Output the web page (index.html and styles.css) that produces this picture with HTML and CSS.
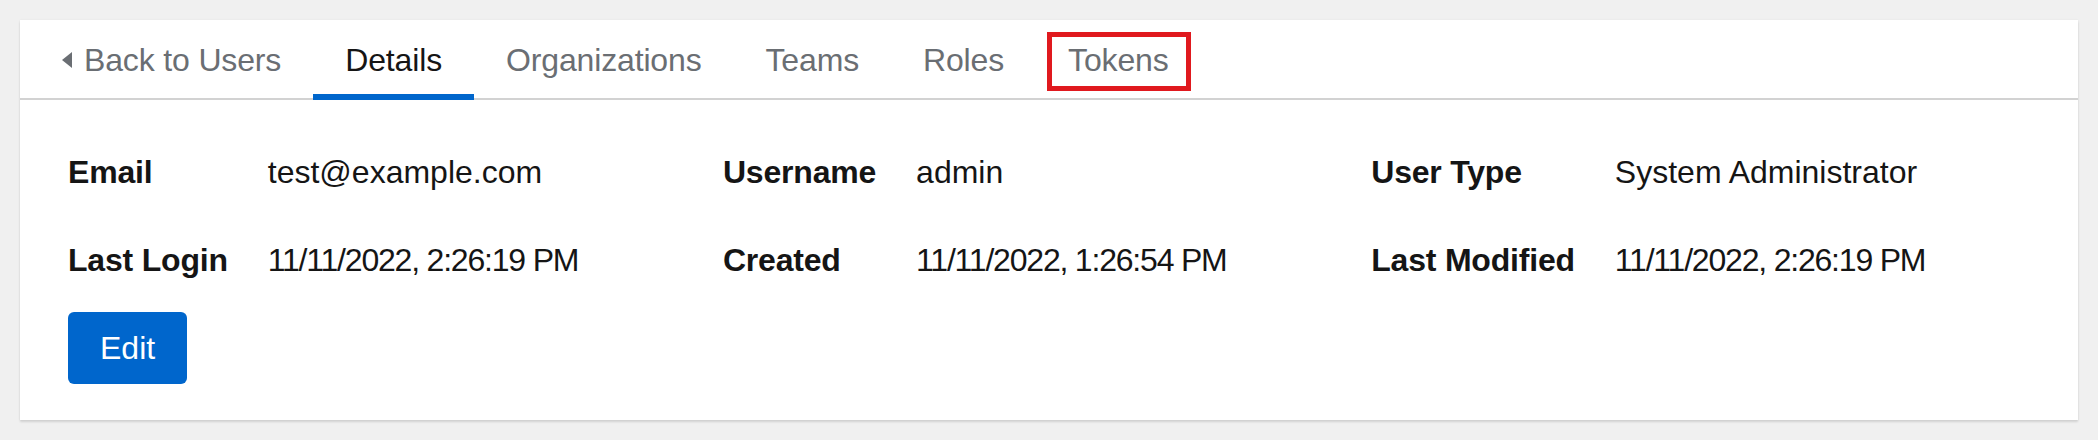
FILE: index.html
```html
<!DOCTYPE html>
<html lang="en">
<head>
<meta charset="utf-8">
<title>User Details</title>
<link rel="stylesheet" href="styles.css">
</head>
<body>
  <section class="card">
    <nav class="tabs">
      <ul class="tab-list">
        <li class="tab">
          <a class="tab-link" href="#">
            <svg class="caret" viewBox="0 0 10 16" width="10" height="16" aria-hidden="true"><path d="M10 0 L0 8 L10 16 Z" fill="#6a6e73"/></svg>
            <span>Back to Users</span>
          </a>
        </li>
        <li class="tab tab-current"><a class="tab-link" href="#">Details</a></li>
        <li class="tab"><a class="tab-link" href="#">Organizations</a></li>
        <li class="tab"><a class="tab-link" href="#">Teams</a></li>
        <li class="tab"><a class="tab-link" href="#">Roles</a></li>
        <li class="tab tab-highlight"><a class="tab-link" href="#">Tokens</a></li>
      </ul>
    </nav>
    <div class="card-body">
      <dl class="detail-list">
        <dt>Email</dt><dd>test@example.com</dd>
        <dt>Username</dt><dd>admin</dd>
        <dt>User Type</dt><dd>System Administrator</dd>
        <dt>Last Login</dt><dd class="timestamp">11/11/2022, 2:26:19 PM</dd>
        <dt>Created</dt><dd class="timestamp">11/11/2022, 1:26:54 PM</dd>
        <dt>Last Modified</dt><dd class="timestamp">11/11/2022, 2:26:19 PM</dd>
      </dl>
      <div class="actions">
        <button class="btn-primary" type="button">Edit</button>
      </div>
    </div>
  </section>
</body>
</html>
```
FILE: styles.css
```css
* { box-sizing: border-box; }

html, body {
  margin: 0;
  background: #f0f0f0;
}

body {
  padding: 20px;
  font-family: "Liberation Sans", Arial, sans-serif;
  font-size: 32px;
  color: #151515;
}

.card {
  background: #fff;
  box-shadow: 0 2px 2px 0 rgba(3, 3, 3, 0.12), 0 0 2px 0 rgba(3, 3, 3, 0.06);
}

.tabs {
  border-bottom: 2px solid #d2d2d2;
}

.tab-list {
  display: flex;
  margin: 0;
  padding: 0 0 0 10px;
  list-style: none;
}

.tab {
  position: relative;
}

.tab-link {
  display: flex;
  align-items: center;
  padding: 16px 32px 14px;
  line-height: 48px;
  color: #6a6e73;
  text-decoration: none;
  white-space: nowrap;
  letter-spacing: -0.15px;
}

.caret {
  display: block;
  margin-right: 12px;
}

.tab-current .tab-link {
  color: #151515;
}

.tab-current::after {
  content: "";
  position: absolute;
  left: 0;
  right: 0;
  bottom: -2px;
  height: 6px;
  background: #06c;
}

.tab-highlight::after {
  content: "";
  position: absolute;
  left: 11px;
  right: 10px;
  top: 12px;
  bottom: 7px;
  border: 5px solid #e0191e;
}

.card-body {
  padding: 48px 48px 36px;
}

.detail-list {
  display: grid;
  grid-template-columns: repeat(3, auto minmax(320px, 1fr));
  gap: 40px;
  margin: 0;
  line-height: 48px;
}

.detail-list dt {
  font-weight: 700;
  white-space: nowrap;
  letter-spacing: -0.2px;
}

.detail-list dd {
  margin: 0;
  white-space: nowrap;
}

.detail-list .timestamp {
  letter-spacing: -1.2px;
}

.actions {
  display: flex;
  margin-top: 28px;
}

.btn-primary {
  height: 72px;
  padding: 0 32px;
  border: none;
  border-radius: 6px;
  background: #06c;
  color: #fff;
  font-family: inherit;
  font-size: 32px;
  line-height: 48px;
  cursor: pointer;
}
```
